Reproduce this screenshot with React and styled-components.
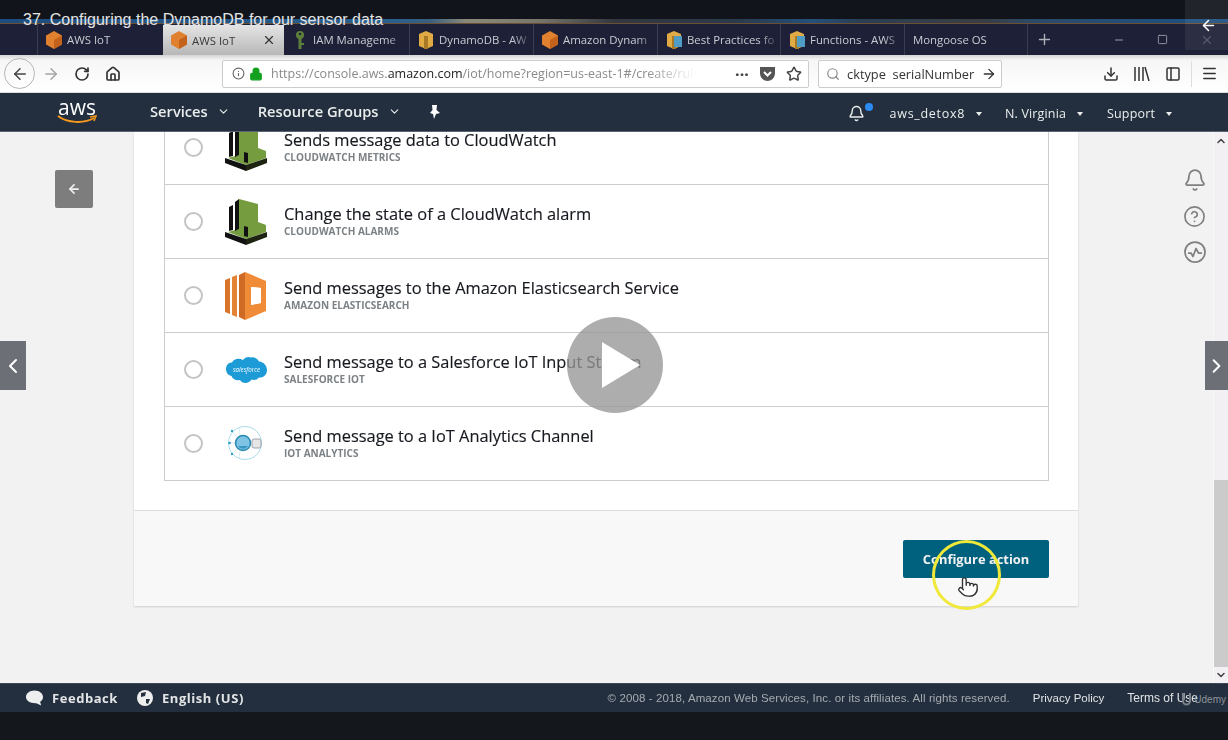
import React from "react";
import styled, { createGlobalStyle } from "styled-components";
import {
  ArrowLeft, ArrowRight, RotateCw, Home, Info, Lock, Star, Search, Download, PanelLeft, Menu,
  Bell, CircleHelp, X, Plus, Minus, Square, ChevronLeft, ChevronRight, ChevronDown,
  ChevronUp, Pointer,
} from "lucide-react";

const Global = createGlobalStyle`
  html, body { margin: 0; padding: 0; background: #14171c; overflow: hidden; }
  * { box-sizing: border-box; }
`;

const Page = styled.div`
  position: relative;
  width: 1228px;
  height: 740px;
  display: flex;
  flex-direction: column;
  overflow: hidden;
  font-family: "Open Sans", "Liberation Sans", sans-serif;
`;

const Video = styled.div`
  flex: 1;
  display: flex;
  flex-direction: column;
  min-height: 0;
  filter: blur(0.35px);
`;

const TopStrip = styled.div`
  height: 19px;
  flex: none;
  background: #11141b;
`;

const HorizonLine = styled.div`
  height: 5px;
  flex: none;
  background: linear-gradient(90deg, #1d4d7e 0%, #2a5f8e 32%, #3a5f7e 35%, #8a8a7a 38%, #77756a 44%, #33373f 50%, #2b3a4c 60%, #24507a 66%, #2b3f55 70%, #3a3d42 80%, #2c4a68 84%, #1f4f7e 96%);
  border-bottom: 1px solid #6b4f33;
`;

const TabBar = styled.div`
  height: 31px;
  flex: none;
  display: flex;
  padding-left: 37px;
  background: #1d2036;
`;

const Tab = styled.div`
  width: ${(p) => p.$w}px;
  display: flex;
  align-items: center;
  gap: 5px;
  padding-left: 8px;
  font-size: 11.4px;
  color: ${(p) => (p.$active ? "#3a3a3a" : "#c9cbd2")};
  background: ${(p) => (p.$active ? "linear-gradient(#e4e4e4, #b7b7b7)" : "none")};
  margin-top: ${(p) => (p.$active ? "1px" : "0")};
  border-left: ${(p) => (p.$active || p.$plain ? "0" : "1px solid #3a3d52")};
`;

const TabLabel = styled.span`
  flex: 1;
  white-space: nowrap;
  overflow: hidden;
  -webkit-mask-image: ${(p) => (p.$fade ? "linear-gradient(90deg, #000 78%, transparent)" : "none")};
`;

const TabClose = styled.span`
  display: flex;
  margin-right: 8px;
  color: #333;
`;

const NewTab = styled.div`
  width: 34px;
  display: flex;
  align-items: center;
  justify-content: center;
  color: #aeb0ba;
  border-left: 1px solid #3a3d52;
`;

const WindowButtons = styled.div`
  flex: 1;
  display: flex;
  align-items: center;
  justify-content: flex-end;
  gap: 32px;
  padding-right: 14px;
  color: #9a9ca8;
`;

const CloseDim = styled.span`
  display: flex;
  color: #4a4e62;
`;

const Toolbar = styled.div`
  height: 38px;
  flex: none;
  display: flex;
  align-items: center;
  padding: 0 10px 0 4px;
  background: linear-gradient(#d4d4d6 0, #f6f6f6 14%, #fff 100%);
  border-bottom: 1px solid #ddd;
  color: #444;
`;

const CircleButton = styled.div`
  width: 31px;
  height: 31px;
  border-radius: 50%;
  border: 1px solid #b5b5b5;
  display: flex;
  align-items: center;
  justify-content: center;
`;

const ToolIcon = styled.div`
  width: 31px;
  display: flex;
  justify-content: center;
  color: ${(p) => p.$color || "#333"};
`;

const UrlBar = styled.div`
  width: 587px;
  height: 28px;
  margin-left: 94px;
  display: flex;
  align-items: center;
  gap: 4px;
  padding: 0 6px 0 9px;
  background: #fff;
  border: 1px solid #ccc;
  border-radius: 2px;
`;

const UrlText = styled.div`
  width: 425px;
  margin-left: 4px;
  font-size: 12.5px;
  color: #8a8a8a;
  white-space: nowrap;
  overflow: hidden;
  -webkit-mask-image: linear-gradient(90deg, #000 88%, transparent);
  b { font-weight: 400; color: #222; }
`;

const UrlActions = styled.div`
  flex: 1;
  display: flex;
  align-items: center;
  justify-content: flex-end;
  gap: 10px;
  color: #444;
`;

const Dots = styled.span`
  font-size: 14px;
  font-weight: 800;
  letter-spacing: 0.5px;
  line-height: 1;
  margin-top: -6px;
`;

const Pocket = styled.svg`
  width: 17px;
  height: 16px;
`;

const SearchBox = styled.div`
  width: 184px;
  height: 28px;
  margin-left: 9px;
  display: flex;
  align-items: center;
  gap: 7px;
  padding: 0 4px 0 7px;
  background: #fff;
  border: 1px solid #ccc;
  border-radius: 2px;
  font-size: 12.8px;
  color: #333;
  white-space: pre;
  span { flex: 1; }
`;

const ToolRight = styled.div`
  flex: 1;
  display: flex;
  justify-content: flex-end;
  align-items: center;
`;

const ToolDivider = styled.div`
  width: 1px;
  height: 26px;
  background: #ddd;
  margin: 0 9px 0 3px;
`;

const AwsNav = styled.div`
  height: 39px;
  flex: none;
  display: flex;
  align-items: center;
  background: #232f3e;
  color: #eaeded;
  border-bottom: 1px solid #5a6470;
`;

const AwsLogo = styled.div`
  width: 40px;
  margin: -3px 53px 0 57px;
  display: flex;
  flex-direction: column;
  align-items: center;
  color: #fff;
  font-size: 21px;
  line-height: 18px;
  svg { margin-top: -1px; }
`;

const NavMenu = styled.div`
  display: flex;
  align-items: center;
  gap: 9px;
  font-size: 14.7px;
  font-weight: 600;
  margin: -2px ${(p) => p.$gap}px 0 0;
`;

const NavRight = styled.div`
  flex: 1;
  display: flex;
  justify-content: flex-end;
  align-items: center;
  padding: 3px 56px 0 0;
`;

const NavBell = styled.div`
  position: relative;
  display: flex;
  margin-right: 25px;
`;

const BellDot = styled.span`
  position: absolute;
  top: -2px;
  right: -8px;
  width: 8px;
  height: 8px;
  border-radius: 50%;
  background: #2a8bf2;
`;

const NavItem = styled.div`
  display: flex;
  align-items: center;
  gap: 11px;
  font-size: 12.5px;
  letter-spacing: ${(p) => p.$ls || 0.15}px;
  margin-left: ${(p) => p.$gap || 0}px;
`;

const Caret = styled.span`
  width: 0;
  height: 0;
  border: 3.5px solid transparent;
  border-top: 4px solid #eaeded;
  border-bottom: 0;
`;

const Main = styled.div`
  flex: 1;
  min-height: 0;
  display: flex;
  background: #f2f2f2;
  overflow: hidden;
`;

const LeftGutter = styled.div`
  width: 134px;
  flex: none;
  padding: 38px 0 0 55px;
`;

const BackButton = styled.div`
  width: 38px;
  height: 38px;
  border-radius: 2px;
  background: #7d7d7d;
  color: #eee;
  display: flex;
  align-items: center;
  justify-content: center;
`;

const Card = styled.div`
  width: 944px;
  height: 474px;
  flex: none;
  display: flex;
  flex-direction: column;
  background: #fff;
  box-shadow: 0 1px 2px rgba(0, 0, 0, 0.15);
`;

const CardBody = styled.div`
  flex: 1;
  min-height: 0;
  padding: 0 29px 0 30px;
  overflow: hidden;
`;

const Table = styled.div`
  margin-top: -21px;
  border: 1px solid #ccc;
  border-width: 0 1px 1px;
`;

const Row = styled.div`
  height: 74px;
  display: flex;
  align-items: center;
  padding-left: 19px;
  border-bottom: 1px solid #ccc;
  &:last-child { border-bottom: 0; height: 73px; }
`;

const Radio = styled.span`
  width: 19px;
  height: 19px;
  flex: none;
  border-radius: 50%;
  border: 2px solid #c4c4c4;
  background: #fff;
`;

const RowIcon = styled.div`
  width: 42px;
  margin: 0 17px 0 22px;
  flex: none;
  display: flex;
  justify-content: center;
`;

const RowText = styled.div`
  display: flex;
  flex-direction: column;
`;

const RowTitle = styled.div`
  font-size: 16.4px;
  line-height: 20px;
  margin-top: -2px;
  color: #16191f;
  -webkit-text-stroke: 0.15px #16191f;
`;

const RowSub = styled.div`
  font-size: 10px;
  line-height: 13px;
  margin-top: 1px;
  font-weight: 700;
  color: #7b8185;
`;

const CardFooter = styled.div`
  height: 96px;
  flex: none;
  display: flex;
  justify-content: flex-end;
  padding: 29px 29px 0 0;
  background: #f9f8f9;
  border-top: 1px solid #ddd;
`;

const PrimaryButton = styled.div`
  width: 146px;
  height: 38px;
  display: flex;
  align-items: center;
  justify-content: center;
  background: #00617f;
  border-radius: 2px;
  color: #f2f2f2;
  font-size: 12.9px;
  font-weight: 700;
`;

const RightGutter = styled.div`
  flex: 1;
  display: flex;
  flex-direction: column;
  align-items: center;
  gap: 13px;
  padding: 36px 0 0 98px;
  color: #808080;
`;

const Scrollbar = styled.div`
  width: 15px;
  flex: none;
  display: flex;
  flex-direction: column;
  background: #f2f0f2;
  border-left: 1px solid #f8f8f8;
  color: #444;
`;

const ScrollArrow = styled.div`
  height: ${(p) => p.$h}px;
  flex: none;
  display: flex;
  align-items: center;
  justify-content: center;
`;

const ScrollTrack = styled.div`
  flex: 1;
`;

const ScrollThumb = styled.div`
  height: 187px;
  margin-top: 331px;
  background: #cbcbcb;
`;

const Footer = styled.div`
  height: 29px;
  flex: none;
  display: flex;
  align-items: center;
  padding: 0 0 0 26px;
  background: #232f3e;
  color: #e2e4e6;
  font-size: 13px;
  border-top: 1px solid #3d4856;
`;

const FooterLink = styled.div`
  display: flex;
  align-items: center;
  gap: 9px;
  font-weight: 700;
  letter-spacing: 0.55px;
  margin-right: 19px;
`;

const FooterRight = styled.div`
  flex: 1;
  display: flex;
  justify-content: flex-end;
  align-items: center;
  gap: 23px;
  padding-right: 30px;
  font-family: "Liberation Sans", sans-serif;
  font-size: 11.5px;
  white-space: nowrap;
`;

const Copyright = styled.span`
  color: #a6abb1;
  letter-spacing: 0.1px;
`;

const TermsLink = styled.span`
  font-size: 12px;
`;

const BottomBar = styled.div`
  height: 28px;
  flex: none;
  background: #14171c;
`;

const VideoTitle = styled.div`
  position: absolute;
  left: 23px;
  top: 10px;
  font-family: "Liberation Sans", sans-serif;
  font-size: 16px;
  line-height: 19px;
  color: #e4e4e4;
`;

const CornerBack = styled.div`
  position: absolute;
  right: 0;
  top: 0;
  width: 43px;
  height: 50px;
  padding-left: 3px;
  display: flex;
  align-items: center;
  justify-content: center;
  background: rgba(255, 255, 255, 0.07);
  color: #fff;
`;

const SideArrow = styled.div`
  position: absolute;
  top: 341px;
  ${(p) => (p.$right ? "right: 0; width: 23px;" : "left: 0; width: 26px;")}
  height: 49px;
  display: flex;
  align-items: center;
  justify-content: center;
  background: #6c6f76;
  color: #fff;
`;

const PlayButton = styled.div`
  position: absolute;
  left: 567px;
  top: 317px;
  width: 96px;
  height: 96px;
  border-radius: 50%;
  background: rgba(150, 150, 150, 0.78);
  display: flex;
  align-items: center;
  justify-content: center;
  svg { margin-left: 12px; }
`;

const CursorRing = styled.div`
  position: absolute;
  left: 932px;
  top: 540px;
  width: 69px;
  height: 70px;
  border-radius: 50%;
  border: 3.5px solid #f1e93a;
  display: flex;
  align-items: center;
  justify-content: center;
  svg { margin: 23px 0 0 3px; }
`;

const Watermark = styled.div`
  position: absolute;
  right: 2px;
  top: 692px;
  display: flex;
  align-items: center;
  gap: 3px;
  font-family: "Liberation Sans", sans-serif;
  font-size: 10px;
  color: #8d929a;
`;

const Cube = ({ color = "#e0812f" }) => (
  <svg width="16" height="18" viewBox="0 0 16 18">
    <polygon points="8,0 16,4.5 16,13.5 8,18 0,13.5 0,4.5" fill={color} />
    <polygon points="8,9 16,4.5 16,13.5 8,18" fill="#c2621b" />
  </svg>
);

const Box = ({ doc }) => (
  <svg width="16" height="18" viewBox="0 0 16 18">
    <polygon points="8,0 15,3 15,15 8,18 1,15 1,3" fill="#e0aa45" />
    <polygon points="6,5 10,5 10,18 6,18" fill="#a97a25" />
    {doc && <rect x="8" y="5" width="8" height="11" fill="#4f9cc4" />}
  </svg>
);

const Key = () => (
  <svg width="16" height="20" viewBox="0 0 16 20">
    <circle cx="8" cy="5" r="4" fill="#5d7f3a" />
    <rect x="6.5" y="8" width="3" height="11" fill="#5d7f3a" />
    <rect x="9" y="13" width="3" height="2" fill="#5d7f3a" />
    <circle cx="8" cy="4" r="1.2" fill="#1d2036" />
  </svg>
);

const CloudWatch = () => (
  <svg width="42" height="46" viewBox="0 0 42 46">
    <polygon points="14,0 33,5 33,23 41,26 41,33 21,40 3,33 14,30" fill="#759c3e" />
    <polygon points="4,8 8,6 8,31 4,32" fill="#111" />
    <polygon points="10,3 14,0 14,30 10,32" fill="#111" />
    <polygon points="19,27 23,28 23,38 19,37" fill="#111" />
    <polygon points="0,33 21,40 21,46 0,38" fill="#111" />
    <polygon points="21,40 42,33 42,38 21,46" fill="#1d2412" />
  </svg>
);

const Elasticsearch = () => (
  <svg width="42" height="48" viewBox="0 0 42 48">
    <polygon points="0,8 5,6 5,42 0,40" fill="#d9752b" />
    <polygon points="7,5 12,3 12,45 7,43" fill="#e38333" />
    <polygon points="14,3 20,0 20,48 14,45" fill="#cf6a24" />
    <path d="M20 0 L41 9 V39 L20 48 Z M26 15 V33 L36 31 V16 Z" fill="#f08c37" fillRule="evenodd" />
    <polygon points="26,15 36,16 36,31 26,33" fill="#fff" />
  </svg>
);

const SalesforceText = styled.text`
  font-family: "Open Sans", sans-serif;
  font-size: 6.2px;
  font-style: italic;
  fill: #fff;
`;

const Salesforce = () => (
  <svg width="41" height="28" viewBox="0 0 41 28">
    <path
      d="M17 4 C19 1.500 22 0 25 1.500 C27 1 31 1.500 33 5.500 C38 6 41 10 41 14 C41 19 37 22 33 21.500 C31 24 28 24.500 25.500 23.500 C23 28 16 28 14 24 C10 25 6.500 23 5.500 20 C1.500 19 0 16 0 13 C0 9 3 6 6 6.500 C8 2.500 13 2 17 4 Z"
      fill="#1c9bd7"
    />
    <SalesforceText x="20.500" y="15.500" textAnchor="middle">salesforce</SalesforceText>
  </svg>
);

const Analytics = () => (
  <svg width="38" height="36" viewBox="0 0 38 36">
    <circle cx="18" cy="17" r="16.500" fill="none" stroke="#a9dcea" strokeWidth="1" />
    <path d="M3 17 H9 M5 5 L10 11 M5 28 L10 23 M12 2 L13 9 M12 32 L13 25" stroke="#cde8f0" strokeWidth="0.8" />
    <circle cx="2.500" cy="17" r="1.300" fill="#2e9fc4" />
    <circle cx="5" cy="5" r="1.200" fill="#2e9fc4" />
    <circle cx="5" cy="28" r="1.200" fill="#2e9fc4" />
    <circle cx="16" cy="17" r="7.500" fill="#7fc4e4" stroke="#2a8ab0" strokeWidth="1.500" />
    <path d="M11 20 A6 6 0 0 0 21 20 Z" fill="#3a97c4" />
    <rect x="25" y="13" width="9" height="9" rx="2" fill="#e6e6e6" stroke="#9aa5ab" strokeWidth="1" />
  </svg>
);

const ActivityRing = () => (
  <svg width="22" height="22" viewBox="0 0 22 22" fill="none" stroke="currentColor" strokeWidth="1.750">
    <circle cx="11" cy="11" r="10" />
    <path d="M4 12 H7 L9 15.500 L12 7.500 L14.500 12 H18" strokeLinejoin="round" />
  </svg>
);

const rows = [
  { id: "metrics", icon: <CloudWatch />, title: "Sends message data to CloudWatch", sub: "CLOUDWATCH METRICS" },
  { id: "alarms", icon: <CloudWatch />, title: "Change the state of a CloudWatch alarm", sub: "CLOUDWATCH ALARMS" },
  { id: "es", icon: <Elasticsearch />, title: "Send messages to the Amazon Elasticsearch Service", sub: "AMAZON ELASTICSEARCH" },
  { id: "sf", icon: <Salesforce />, title: "Send message to a Salesforce IoT Input Stream", sub: "SALESFORCE IOT" },
  { id: "analytics", icon: <Analytics />, title: "Send message to a IoT Analytics Channel", sub: "IOT ANALYTICS" },
];

const tabs = [
  { label: "AWS IoT", icon: <Cube />, w: 126 },
  { label: "AWS IoT", icon: <Cube />, active: true, w: 121 },
  { label: "IAM Manageme", icon: <Key />, fade: true, w: 125, plain: true },
  { label: "DynamoDB - AW", icon: <Box />, fade: true, w: 124 },
  { label: "Amazon Dynam", icon: <Cube />, fade: true, w: 124 },
  { label: "Best Practices fo", icon: <Box doc />, fade: true, w: 123 },
  { label: "Functions - AWS", icon: <Box doc />, fade: true, w: 124 },
  { label: "Mongoose OS", w: 123 },
];

export default function App() {
  return (
    <Page>
      <Global />
      <Video>
        <TopStrip />
        <HorizonLine />
        <TabBar>
          {tabs.map((t, i) => (
            <Tab key={i} $active={t.active} $w={t.w} $plain={t.plain}>
              {t.icon}
              <TabLabel $fade={t.fade}>{t.label}</TabLabel>
              {t.active && (
                <TabClose>
                  <X size={14} />
                </TabClose>
              )}
            </Tab>
          ))}
          <NewTab>
            <Plus size={17} />
          </NewTab>
          <WindowButtons>
            <Minus size={12} />
            <Square size={11} />
            <CloseDim>
              <X size={14} />
            </CloseDim>
          </WindowButtons>
        </TabBar>
        <Toolbar>
          <CircleButton>
            <ArrowLeft size={18} />
          </CircleButton>
          <ToolIcon $color="#a5a5a5">
            <ArrowRight size={18} />
          </ToolIcon>
          <ToolIcon>
            <RotateCw size={16} strokeWidth={2.5} />
          </ToolIcon>
          <ToolIcon>
            <Home size={16} strokeWidth={2.5} />
          </ToolIcon>
          <UrlBar>
            <Info size={13} color="#666" />
            <Lock size={14} color="#12a11e" fill="#12a11e" />
            <UrlText>
              https://console.aws.<b>amazon.com</b>/iot/home?region=us-east-1#/create/rule
            </UrlText>
            <UrlActions>
              <Dots>...</Dots>
              <Pocket viewBox="0 0 17 16">
                <path d="M1 1 H16 V7 C16 12 12 15 8.500 15 C5 15 1 12 1 7 Z" fill="#555" />
                <path d="M5 6 L8.500 9.500 L12 6" fill="none" stroke="#fff" strokeWidth="2" />
              </Pocket>
              <Star size={16} strokeWidth={2.25} />
            </UrlActions>
          </UrlBar>
          <SearchBox>
            <Search size={16} color="#888" />
            <span>cktype  serialNumber</span>
            <ArrowRight size={18} />
          </SearchBox>
          <ToolRight>
            <ToolIcon>
              <Download size={16} strokeWidth={2.25} />
            </ToolIcon>
            <ToolIcon>
              <svg width="17" height="15" viewBox="0 0 17 15" fill="none" stroke="#333" strokeWidth="1.500">
                <path d="M2 1 V15 M6 1 V15 M10 1 V15 M12 1 L16 15" />
              </svg>
            </ToolIcon>
            <ToolIcon>
              <PanelLeft size={16} strokeWidth={2.25} />
            </ToolIcon>
            <ToolDivider />
            <Menu size={17} strokeWidth={2.25} color="#333" />
          </ToolRight>
        </Toolbar>
        <AwsNav>
          <AwsLogo>
            aws
            <svg width="40" height="9" viewBox="0 0 40 9">
              <path d="M1 1 C10 8 27 9 37 3" fill="none" stroke="#f7981d" strokeWidth="2" />
              <path d="M33 2 L39 1 L37 6" fill="none" stroke="#f7981d" strokeWidth="1.500" />
            </svg>
          </AwsLogo>
          <NavMenu $gap={28}>
            Services <ChevronDown size={13} />
          </NavMenu>
          <NavMenu $gap={28}>
            Resource Groups <ChevronDown size={13} />
          </NavMenu>
          <svg width="12" height="14" viewBox="0 0 12 14">
            <path d="M3 0 H8 L7.500 5 L11 8 L7 9 L5 14 L4 9 L1 8 L3.500 5 Z" fill="#fff" />
          </svg>
          <NavRight>
            <NavBell>
              <Bell size={17} />
              <BellDot />
            </NavBell>
            <NavItem $ls={0.7}>
              aws_detox8 <Caret />
            </NavItem>
            <NavItem $gap={23}>
              N. Virginia <Caret />
            </NavItem>
            <NavItem $gap={24}>
              Support <Caret />
            </NavItem>
          </NavRight>
        </AwsNav>
        <Main>
          <LeftGutter>
            <BackButton>
              <ArrowLeft size={14} strokeWidth={3} />
            </BackButton>
          </LeftGutter>
          <Card>
            <CardBody>
              <Table>
                {rows.map((r) => (
                  <Row key={r.id}>
                    <Radio />
                    <RowIcon>{r.icon}</RowIcon>
                    <RowText>
                      <RowTitle>{r.title}</RowTitle>
                      <RowSub>{r.sub}</RowSub>
                    </RowText>
                  </Row>
                ))}
              </Table>
            </CardBody>
            <CardFooter>
              <PrimaryButton>Configure action</PrimaryButton>
            </CardFooter>
          </Card>
          <RightGutter>
            <Bell size={24} strokeWidth={1.75} />
            <CircleHelp size={23} strokeWidth={1.75} />
            <ActivityRing />
          </RightGutter>
          <Scrollbar>
            <ScrollArrow $h={17}>
              <ChevronUp size={12} strokeWidth={3} />
            </ScrollArrow>
            <ScrollTrack>
              <ScrollThumb />
            </ScrollTrack>
            <ScrollArrow $h={16}>
              <ChevronDown size={12} strokeWidth={3} />
            </ScrollArrow>
          </Scrollbar>
        </Main>
        <Footer>
          <FooterLink>
            <svg width="17" height="16" viewBox="0 0 18 16">
              <path d="M9 0 C14 0 18 3 18 7 C18 9 17 11 15 12 L16 16 L11 13.500 C5 14 0 11 0 7 C0 3 4 0 9 0 Z" fill="#eee" />
            </svg>
            Feedback
          </FooterLink>
          <FooterLink>
            <svg width="16" height="16" viewBox="0 0 16 16">
              <circle cx="8" cy="8" r="8" fill="#eee" />
              <path d="M4 3 L9 2 L8 6 L4 7 Z M9 9 L13 9 L11 14 L9 13 Z" fill="#232f3e" />
            </svg>
            English (US)
          </FooterLink>
          <FooterRight>
            <Copyright>© 2008 - 2018, Amazon Web Services, Inc. or its affiliates. All rights reserved.</Copyright>
            <span>Privacy Policy</span>
            <TermsLink>Terms of Use</TermsLink>
          </FooterRight>
        </Footer>
        <BottomBar />
      </Video>
      <VideoTitle>37. Configuring the DynamoDB for our sensor data</VideoTitle>
      <CornerBack>
        <ArrowLeft size={17} strokeWidth={2.25} />
      </CornerBack>
      <SideArrow>
        <ChevronLeft size={24} strokeWidth={2} />
      </SideArrow>
      <SideArrow $right>
        <ChevronRight size={24} strokeWidth={2} />
      </SideArrow>
      <PlayButton>
        <svg width="38" height="46" viewBox="0 0 38 46">
          <polygon points="0,0 38,23 0,46" fill="#fff" />
        </svg>
      </PlayButton>
      <CursorRing>
        <Pointer size={22} fill="#fff" color="#333" strokeWidth={1.5} />
      </CursorRing>
      <Watermark>
        <svg width="9" height="14" viewBox="0 0 9 14">
          <path d="M1 1 V9 A3.500 3.500 0 0 0 8 9 V1" fill="none" stroke="#7d828a" strokeWidth="2" />
        </svg>
        Udemy
      </Watermark>
    </Page>
  );
}
